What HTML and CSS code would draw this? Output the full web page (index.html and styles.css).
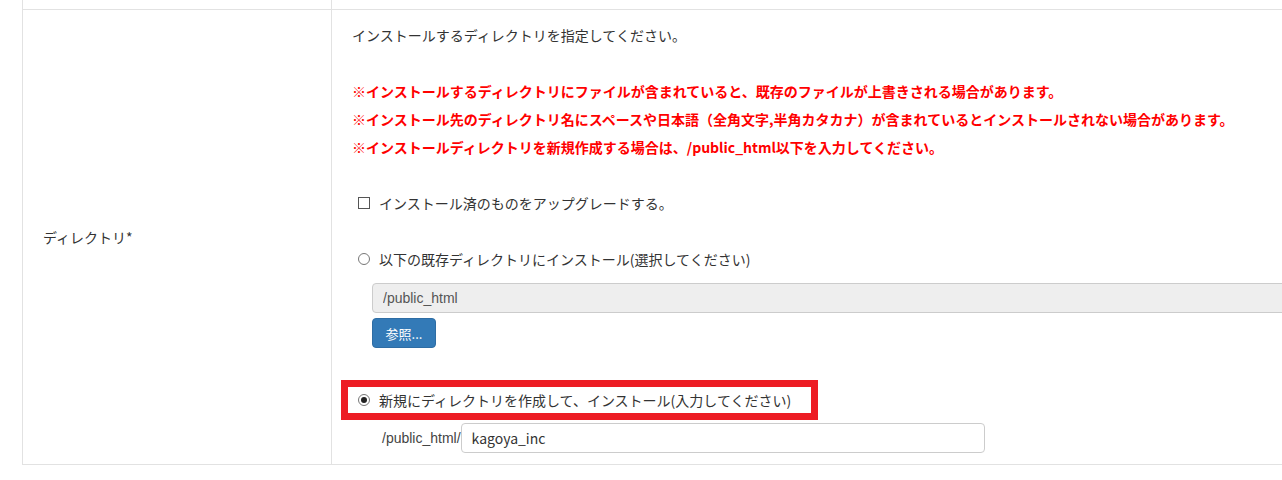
FILE: index.html
```html
<!DOCTYPE html>
<html lang="ja">
<head>
    <meta charset="UTF-8">
    <title>インストール - ディレクトリ</title>
    <link rel="stylesheet" href="styles.css">
</head>
<body>
    <table class="form-table">
        <tr class="prev-row">
            <td class="label-cell"></td>
            <td class="field-cell"></td>
        </tr>
        <tr>
            <td class="label-cell">ディレクトリ*</td>
            <td class="field-cell">
                <p class="lead">インストールするディレクトリを指定してください。</p>
                <div class="notes">
                    <p>※インストールするディレクトリにファイルが含まれていると、既存のファイルが上書きされる場合があります。</p>
                    <p>※インストール先のディレクトリ名にスペースや日本語（全角文字,半角カタカナ）が含まれているとインストールされない場合があります。</p>
                    <p>※インストールディレクトリを新規作成する場合は、/public_html以下を入力してください。</p>
                </div>
                <label class="option upgrade">
                    <input type="checkbox" class="check">
                    <span>インストール済のものをアップグレードする。</span>
                </label>
                <label class="option existing">
                    <input type="radio" name="dir" class="radio">
                    <span>以下の既存ディレクトリにインストール(選択してください)</span>
                </label>
                <div class="sub">
                    <input type="text" class="path-input" value="/public_html" readonly>
                    <button type="button" class="btn-browse">参照...</button>
                </div>
                <div class="highlight">
                    <label class="option">
                        <input type="radio" name="dir" class="radio" checked>
                        <span>新規にディレクトリを作成して、インストール(入力してください)</span>
                    </label>
                </div>
                <div class="new-dir">
                    <span class="prefix">/public_html/</span>
                    <input type="text" class="dir-input" value="kagoya_inc">
                </div>
            </td>
        </tr>
    </table>
</body>
</html>
```

FILE: styles.css
```css
html, body {
    overflow: hidden;
}
body {
    margin: 0;
    padding: 0 0 0 22px;
    background-color: #fff;
    color: #333;
    font-family: "Noto Sans CJK JP", "Noto Sans", sans-serif;
    font-size: 14px;
}
.form-table {
    border-collapse: collapse;
    table-layout: fixed;
    width: 1320px;
}
.form-table td {
    border: 1px solid #e2e2e2;
    vertical-align: middle;
}
.prev-row td {
    border-top: 0;
    height: 9px;
    padding: 0;
}
.label-cell {
    width: 309px;
    box-sizing: border-box;
    padding: 0 20px;
    font-size: 14px;
}
.field-cell {
    padding: 15px 20px 11px 20px;
}
.lead {
    margin: 0;
    line-height: 20px;
}
.notes {
    margin-top: 32px;
    color: #f00;
    font-weight: bold;
}
.notes p {
    margin: 0;
    line-height: 28px;
}
.option {
    display: flex;
    align-items: center;
    height: 20px;
    line-height: 20px;
}
.upgrade {
    margin-top: 32px;
}
.existing {
    margin-top: 36px;
}
.check, .radio {
    appearance: none;
    -webkit-appearance: none;
    margin: 0 9px 0 6px;
    width: 12px;
    height: 12px;
    border: 1px solid #555;
    background: #fff;
    box-sizing: border-box;
}
.radio {
    border-color: #777;
    border-radius: 50%;
    position: relative;
}
.radio:checked::after {
    content: "";
    position: absolute;
    left: 2px;
    top: 2px;
    width: 6px;
    height: 6px;
    border-radius: 50%;
    background: #222;
}
.sub {
    margin: 14px 0 0 20px;
}
.path-input {
    display: block;
    width: 960px;
    height: 30px;
    box-sizing: border-box;
    padding: 0 10px;
    border: 1px solid #ccc;
    border-radius: 4px;
    background: #eee;
    color: #555;
    font-family: "Liberation Sans", Arial, sans-serif;
    font-size: 14px;
    outline: none;
}
.btn-browse {
    display: block;
    margin-top: 5px;
    width: 64px;
    height: 30px;
    padding: 0;
    border: 1px solid #2e6da4;
    border-radius: 4px;
    background: #337ab7;
    color: #fff;
    font-family: "Noto Sans CJK JP", sans-serif;
    font-size: 13px;
}
.highlight {
    display: inline-block;
    margin: 32px 0 0 -11px;
    padding: 3px 20px 3px 4px;
    border: 7px solid #ed1c24;
}
.new-dir {
    display: flex;
    align-items: center;
    margin: 3px 0 0 30px;
}
.prefix {
    color: #444;
    font-family: "Liberation Sans", Arial, sans-serif;
}
.dir-input {
    width: 524px;
    height: 30px;
    box-sizing: border-box;
    padding: 0 10px;
    border: 1px solid #ccc;
    border-radius: 4px;
    background: #fff;
    color: #333;
    font-family: "Noto Sans CJK JP", sans-serif;
    font-size: 14px;
    outline: none;
}
```
